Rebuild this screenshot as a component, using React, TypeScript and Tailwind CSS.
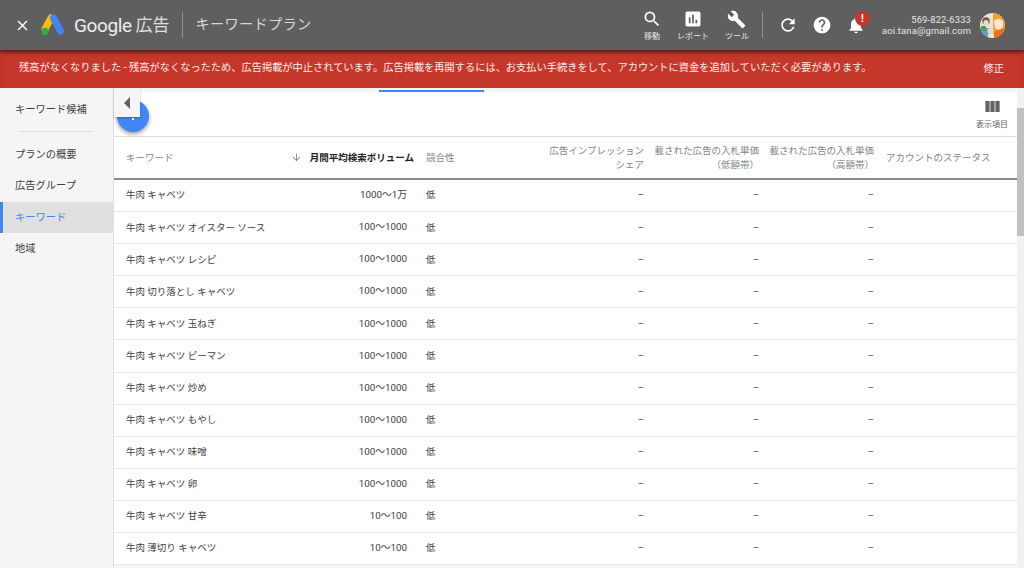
import type { ReactNode } from "react";
import { MdArrowDownward, MdAssessment, MdBuild, MdClose, MdHelp, MdNotifications, MdRefresh, MdSearch, MdViewColumn } from "react-icons/md";

const ROWS = [
	{ keyword: "牛肉 キャベツ", volume: "1000～1万" },
	{ keyword: "牛肉 キャベツ オイスター ソース", volume: "100～1000" },
	{ keyword: "牛肉 キャベツ レシピ", volume: "100～1000" },
	{ keyword: "牛肉 切り落とし キャベツ", volume: "100～1000" },
	{ keyword: "牛肉 キャベツ 玉ねぎ", volume: "100～1000" },
	{ keyword: "牛肉 キャベツ ピーマン", volume: "100～1000" },
	{ keyword: "牛肉 キャベツ 炒め", volume: "100～1000" },
	{ keyword: "牛肉 キャベツ もやし", volume: "100～1000" },
	{ keyword: "牛肉 キャベツ 味噌", volume: "100～1000" },
	{ keyword: "牛肉 キャベツ 卵", volume: "100～1000" },
	{ keyword: "牛肉 キャベツ 甘辛", volume: "10～100" },
	{ keyword: "牛肉 薄切り キャベツ", volume: "10～100" },
];

const GRID = "grid grid-cols-[172px_128px_100px_130px_115px_115px_1fr]";

function GoogleAdsLogo() {
	return (
		<svg width="24" height="22" viewBox="0 0 24 22">
			<path d="M10 4 L4 15" stroke="#fbbc04" strokeWidth="7" strokeLinecap="round" />
			<path d="M12.5 4 L19.5 17" stroke="#4285f4" strokeWidth="7" strokeLinecap="round" />
			<circle cx="4.2" cy="17.4" r="3.6" fill="#34a853" />
		</svg>
	);
}

function Avatar() {
	return (
		<svg width="25" height="25" viewBox="0 0 25 25" className="rounded-full">
			<rect width="25" height="25" fill="#e9e4da" />
			<rect x="13" width="12" height="25" fill="#f4a02e" />
			<path d="M13 25 L15 18 L25 15 L25 25 Z" fill="#ef6c1a" />
			<path d="M14 8 Q18 4 23 8 L23 14 Q19 19 15 15 Z" fill="#fbe6d3" />
			<rect y="15" width="12" height="10" fill="#5d9fd0" />
			<circle cx="6" cy="8" r="3.8" fill="#6b5a48" />
			<circle cx="6" cy="9.5" r="2.6" fill="#f3d9bf" />
			<circle cx="10.5" cy="18" r="3" fill="#f3d9bf" />
			<rect x="8" y="21" width="6" height="4" fill="#e9e4da" />
			<rect x="1" y="13" width="5" height="5" fill="#4e9a5f" />
		</svg>
	);
}

function NavButton({ icon, label }: { icon: ReactNode; label: string }) {
	return (
		<div className="flex w-[44px] flex-col items-center">
			<div className="flex h-[24px] items-center text-white">{icon}</div>
			<span className="whitespace-nowrap text-[8px] leading-[12px] text-white/85">{label}</span>
		</div>
	);
}

export default function App() {
	return (
		<div className="flex h-[568px] w-[1024px] flex-col overflow-hidden bg-[#f5f5f5] text-[9.5px] text-[#3c4043] [font-family:Roboto,'Noto_Sans_CJK_JP',sans-serif]">
			<header className="relative z-20 flex h-[50px] shrink-0 items-center bg-[#5f5f5f] pl-[14px] pr-[19px] shadow-[0_2px_4px_rgba(0,0,0,0.45)]">
				<MdClose size={17} className="text-white" />
				<div className="ml-[10px]">
					<GoogleAdsLogo />
				</div>
				<span className="ml-[9px] text-[19px] leading-none tracking-[-0.4px] text-white/90">Google</span>
				<span className="ml-[4px] text-[17px] leading-none text-white/80">広告</span>
				<div className="ml-[12px] h-[26px] w-px bg-white/30" />
				<span className="ml-[13px] text-[14.2px] tracking-[0.3px] text-white/75">キーワードプラン</span>

				<div className="ml-auto flex items-center">
					<div className="-mr-[3px]">
						<NavButton icon={<MdSearch size={20} />} label="移動" />
					</div>
					<NavButton icon={<MdAssessment size={20} />} label="レポート" />
					<NavButton icon={<MdBuild size={19} />} label="ツール" />
					<div className="ml-[3px] h-[26px] w-px bg-white/30" />
					<MdRefresh size={20} className="ml-[15px] text-white" />
					<MdHelp size={20} className="ml-[14px] text-white" />
					<div className="relative ml-[14px]">
						<MdNotifications size={20} className="text-white" />
						<span className="absolute -right-[4px] -top-[4px] flex h-[15px] w-[15px] items-center justify-center rounded-full bg-[#c5372a] text-[10px] font-bold text-white">!</span>
					</div>
					<div className="ml-[16px] text-right text-[9.3px] leading-[11px] tracking-[0.2px] text-white/85">
						<div>569-822-6333</div>
						<div>aoi.tana@gmail.com</div>
					</div>
					<div className="ml-[9px]">
						<Avatar />
					</div>
				</div>
			</header>

			<div className="flex h-[38px] shrink-0 items-center justify-between bg-[#c5372a] pl-[19px] pr-[20px] text-[10.22px] text-white/90 shadow-[inset_0_4px_4px_-2px_rgba(0,0,0,0.25)]">
				<span className="-mt-[2px]">残高がなくなりました - 残高がなくなったため、広告掲載が中止されています。広告掲載を再開するには、お支払い手続きをして、アカウントに資金を追加していただく必要があります。</span>
				<span>修正</span>
			</div>

			<div className="flex min-h-0 flex-1">
				<aside className="w-[113px] shrink-0 pt-[12px] text-[10.25px] text-[#3c4043]">
					<div className="flex h-[20px] items-center pl-[15px]">キーワード候補</div>
					<div className="mx-[19px] mt-[11px] h-px bg-[#e0e0e0]" />
					<div className="mt-[7px] flex h-[31px] items-center pl-[15px]">プランの概要</div>
					<div className="flex h-[32px] items-center pb-[1px] pl-[15px]">広告グループ</div>
					<div className="flex h-[31px] items-center border-l-[3px] border-[#4285f4] bg-[#e0e0e0] pl-[12px] text-[#4285f4]">キーワード</div>
					<div className="flex h-[31px] items-center pl-[15px]">地域</div>
				</aside>

				<main className="relative flex min-w-0 flex-1 border-l border-[#e0e0e0]">
					<div className="min-w-0 flex-1">
						<div className="ml-[265px] h-[4px] w-[105px] border-b-2 border-[#4285f4]" />
						<div className="flex h-[45px] justify-end border-b border-[#e0e0e0] bg-white pr-[8px]">
							<div className="flex w-[34px] flex-col items-center pt-[7px] text-[#5f6368]">
								<MdViewColumn size={19} className="-my-[2px]" />
								<span className="mt-[5px] whitespace-nowrap text-[8px] leading-[12px]">表示項目</span>
							</div>
						</div>

						<div className={GRID + " h-[43px] items-center border-b-2 border-[#8a8a8a] bg-white leading-[14px] text-[#80868b]"}>
							<div className="pl-[12px]">キーワード</div>
							<div className="flex items-center justify-end gap-[3px] whitespace-nowrap font-bold text-[#202124]">
								<MdArrowDownward size={11} className="mr-[5px] text-[#80868b]" />
								月間平均検索ボリューム
							</div>
							<div className="pl-[12px]">競合性</div>
							<div className="text-right">広告インプレッション<br />シェア</div>
							<div className="text-right whitespace-nowrap">載された広告の入札単価<br />（低額帯）</div>
							<div className="text-right whitespace-nowrap">載された広告の入札単価<br />（高額帯）</div>
							<div className="pl-[12px] whitespace-nowrap">アカウントのステータス</div>
						</div>

						{ROWS.map((row) => (
							<div key={row.keyword} className={GRID + " h-[32.1px] items-center border-b border-[#e8e8e8] bg-white"}>
								<div className="whitespace-nowrap pl-[12px]">{row.keyword}</div>
								<div className="pr-[7px] text-right text-[9.8px]">{row.volume}</div>
								<div className="pl-[12px]">低</div>
								<div className="text-right">–</div>
								<div className="text-right">–</div>
								<div className="text-right">–</div>
								<div />
							</div>
						))}
					</div>

					<div className="w-[7px] shrink-0 bg-[#f1f1f1] pt-[20px]">
						<div className="h-[128px] bg-[#c1c1c1]" />
					</div>

					<div className="absolute left-[3px] top-[12px] flex h-[32px] w-[32px] justify-center rounded-full bg-[#4285f4] pt-[18px] shadow-[0_2px_4px_rgba(0,0,0,0.4)]">
						<div className="h-[2px] w-[2px] bg-white" />
					</div>
					<div className="absolute left-0 top-0 flex h-[29px] w-[26px] items-center justify-center bg-[#f5f5f5] shadow-[0_1px_2px_rgba(0,0,0,0.25)]">
						<div className="h-0 w-0 border-y-[6px] border-r-[6px] border-y-transparent border-r-[#5f6368]" />
					</div>
				</main>
			</div>
		</div>
	);
}
